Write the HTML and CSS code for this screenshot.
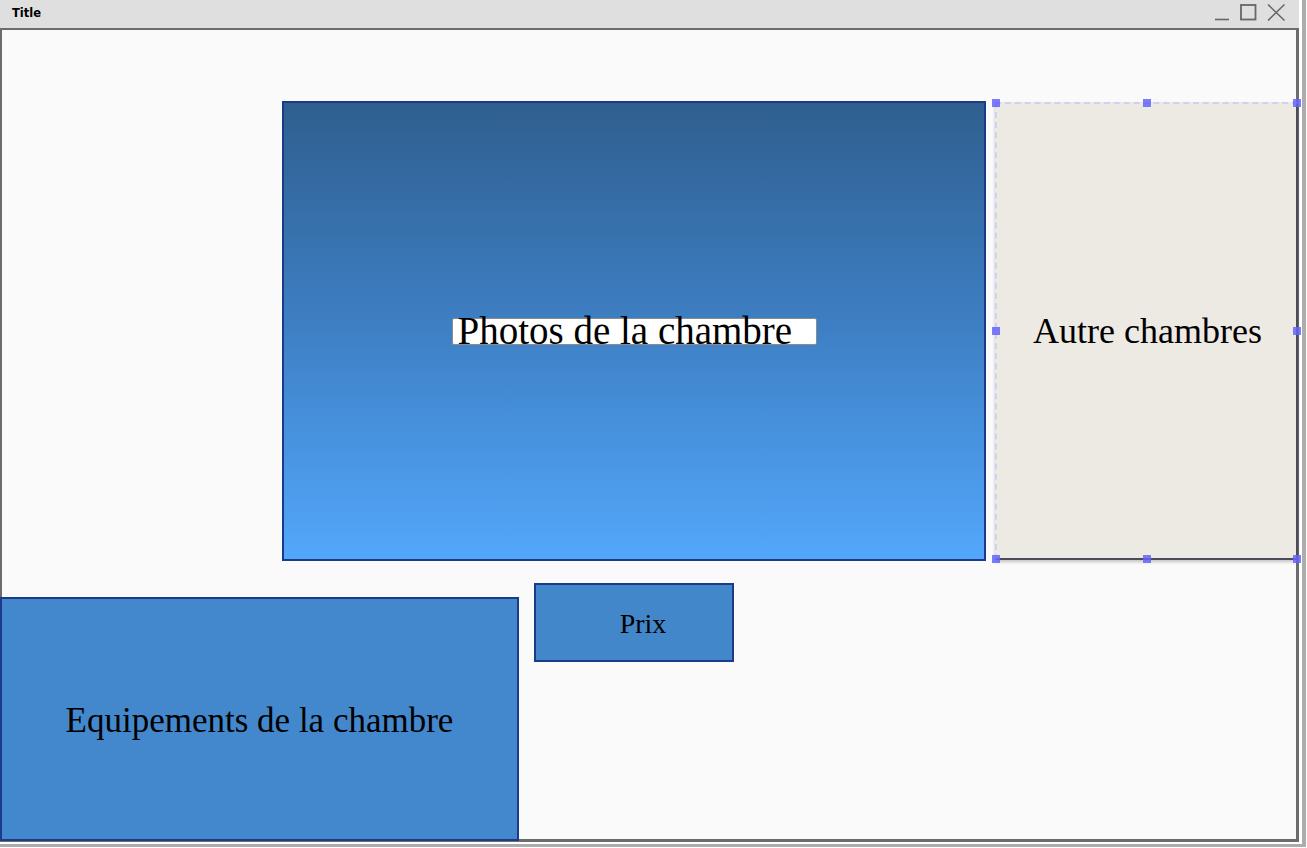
FILE: index.html
```html
<!DOCTYPE html>
<html lang="fr">
<head>
<meta charset="utf-8">
<title>Title</title>
<link rel="stylesheet" href="styles.css">
</head>
<body>
<div class="frame">
  <div class="window">
    <div class="titlebar">
      <span class="title">Title</span>
      <div class="controls">
        <svg class="ctl" width="16" height="18" viewBox="0 0 16 18"><path d="M1 15.5H15" stroke="#666" stroke-width="1.6" fill="none"/></svg>
        <svg class="ctl" width="17" height="17" viewBox="0 0 17 17"><rect x="1" y="1" width="14.5" height="14.5" stroke="#666" stroke-width="1.8" fill="none"/></svg>
        <svg class="ctl" width="18" height="17" viewBox="0 0 18 17"><path d="M1 0.5L17.5 16.5M17.5 0.5L1 16.5" stroke="#666" stroke-width="1.5" fill="none"/></svg>
      </div>
    </div>
    <div class="canvas">
      <div class="panel photos">
        <div class="textbox">Photos de la chambre</div>
      </div>
      <div class="panel autre">
        <span class="autre-label">Autre chambres</span>
        <span class="handle h-tl"></span>
        <span class="handle h-tm"></span>
        <span class="handle h-tr"></span>
        <span class="handle h-ml"></span>
        <span class="handle h-mr"></span>
        <span class="handle h-bl"></span>
        <span class="handle h-bm"></span>
        <span class="handle h-br"></span>
      </div>
      <div class="panel prix"><span>Prix</span></div>
      <div class="panel equip"><span>Equipements de la chambre</span></div>
    </div>
  </div>
</div>
</body>
</html>
```

FILE: styles.css
```css
html, body {
  margin: 0;
  padding: 0;
  background: #ffffff;
}

body {
  width: 1307px;
  height: 848px;
  overflow: hidden;
  font-family: "Liberation Serif", "Times New Roman", serif;
}

.frame {
  width: 1302px;
  height: 844px;
  border-right: 4px solid #acacac;
  border-bottom: 3px solid #acacac;
  box-sizing: content-box;
}

.window {
  width: 1299px;
  height: 842px;
  box-sizing: border-box;
  border-left: 2px solid #6c6c6c;
  border-right: 3px solid #6c6c6c;
  border-bottom: 3px solid #6c6c6c;
  display: flex;
  flex-direction: column;
  background: #fafafa;
}

.titlebar {
  height: 28px;
  flex: 0 0 28px;
  background: #dfdfdf;
  border-bottom: 2px solid #6c6c6c;
  display: flex;
  align-items: flex-start;
  justify-content: space-between;
  margin-left: -2px;
  margin-right: -3px;
  padding-left: 12px;
  padding-right: 12px;
}

.title {
  font-family: "DejaVu Sans", "Noto Sans", sans-serif;
  font-weight: bold;
  font-size: 11.5px;
  line-height: 12px;
  padding-top: 7px;
  color: #000;
}

.controls {
  display: flex;
  align-items: flex-start;
  gap: 10px;
  padding-top: 4px;
  padding-right: 2px;
}

.ctl {
  display: block;
}

.canvas {
  position: relative;
  flex: 1 1 auto;
}

.panel {
  position: absolute;
  box-sizing: border-box;
  display: flex;
  align-items: center;
  justify-content: center;
  color: #000;
}

.photos {
  left: 280px;
  top: 71px;
  width: 704px;
  height: 460px;
  border: 2px solid #1c3a8a;
  background: linear-gradient(to bottom, #2f5f8f 0%, #3e80c5 50%, #53a7fb 100%);
}

.textbox {
  width: 365px;
  height: 27px;
  box-sizing: border-box;
  background: #ffffff;
  border: 1px solid #8c8c8c;
  border-radius: 2px;
  font-size: 39px;
  line-height: 24px;
  padding-left: 5px;
  white-space: nowrap;
  overflow: visible;
  margin-top: 1px;
}

.autre {
  left: 993px;
  top: 72px;
  width: 303px;
  height: 458px;
  background: #ede9e3;
  border: 2px dashed #d2d0f2;
  border-right: 2px solid #4c4c58;
  border-bottom: 2px solid #4c4c58;
  box-shadow: 0 2px 3px rgba(0, 0, 0, 0.22);
  font-size: 36px;
}

.autre-label {
  white-space: nowrap;
  padding-left: 2px;
}

.handle {
  position: absolute;
  width: 8px;
  height: 8px;
  background: rgba(100, 100, 250, 0.85);
}

.h-tl { left: -5px; top: -5px; }
.h-tm { left: 146px; top: -5px; }
.h-tr { left: 296px; top: -5px; }
.h-ml { left: -5px; top: 223px; }
.h-mr { left: 296px; top: 223px; }
.h-bl { left: -5px; top: 451px; }
.h-bm { left: 146px; top: 451px; }
.h-br { left: 296px; top: 451px; }

.prix {
  left: 532px;
  top: 553px;
  width: 200px;
  height: 79px;
  border: 2px solid #1c3a8a;
  background: #4387cb;
  font-size: 28px;
  padding-top: 3px;
  padding-left: 18px;
}

.equip {
  left: -2px;
  top: 567px;
  width: 519px;
  height: 244px;
  border: 2px solid #1c3a8a;
  background: #4388cc;
  font-size: 35px;
  padding-top: 4px;
  white-space: nowrap;
}
```
